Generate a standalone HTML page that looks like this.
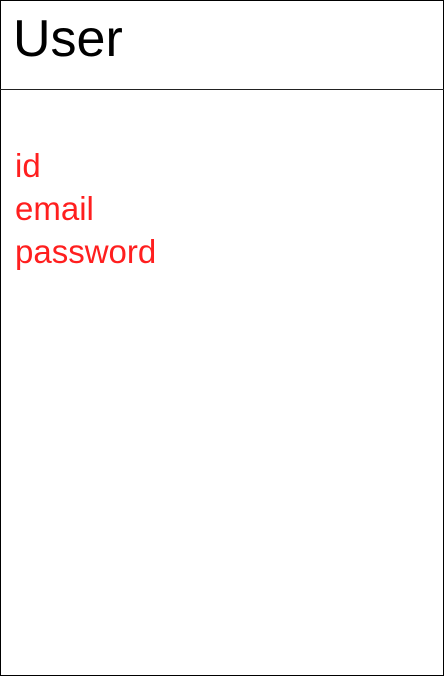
<!DOCTYPE html>
<html><head><style>
html,body{margin:0;padding:0;background:#fff;}
.box{position:absolute;left:0;top:0;width:442px;height:674px;border:1px solid #000;}
.hr{position:absolute;left:0;top:89px;width:444px;height:1px;background:#222;}
.t{position:absolute;left:13px;top:13px;font-family:"Liberation Sans",sans-serif;font-size:52px;line-height:53px;color:#000;}
.f{position:absolute;left:15px;top:144px;font-family:"Liberation Sans",sans-serif;font-size:33px;line-height:43px;color:#ff1f1f;}
</style></head><body>
<div class="box"></div>
<div class="hr"></div>
<div class="t">User</div>
<div class="f">id<br>email<br>password</div>
</body></html>
